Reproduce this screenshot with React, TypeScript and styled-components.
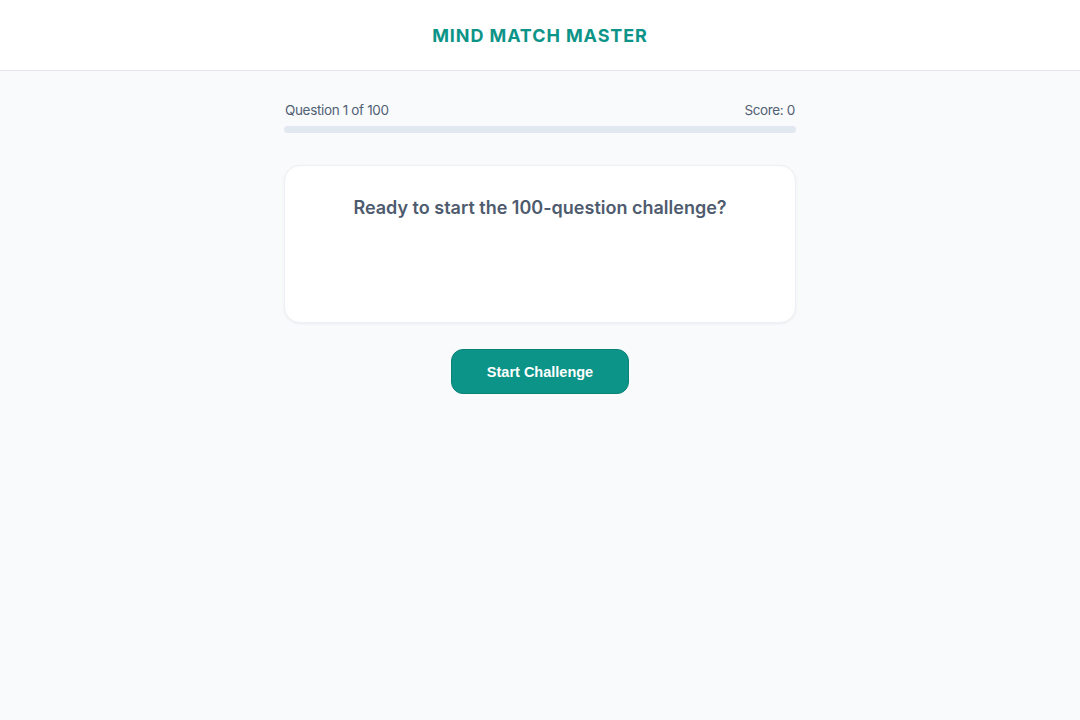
import React, { useState } from 'react';
import styled, { createGlobalStyle } from 'styled-components';

const GlobalStyle = createGlobalStyle`
  * {
    box-sizing: border-box;
  }

  body {
    margin: 0;
    background: #f8fafc;
    font-family: Inter, 'Noto Sans', sans-serif;
  }
`;

const TOTAL = 100;

const App = () => {
  const [current] = useState(1);
  const [score] = useState(0);
  const progress = ((current - 1) / TOTAL) * 100;

  return (
    <Page>
      <GlobalStyle />
      <Header>
        <Title>MIND MATCH MASTER</Title>
      </Header>
      <Main>
        <StatusRow>
          <span>
            Question {current} of {TOTAL}
          </span>
          <span>Score: {score}</span>
        </StatusRow>
        <Track>
          <Fill style={{ width: `${progress}%` }} />
        </Track>
        <Card>
          <Prompt>Ready to start the 100-question challenge?</Prompt>
        </Card>
        <Actions>
          <StartButton>Start Challenge</StartButton>
        </Actions>
      </Main>
    </Page>
  );
};

const Page = styled.div`
  min-height: 100vh;
  background: #f8fafc;
`;

const Header = styled.header`
  height: 71px;
  display: flex;
  align-items: center;
  justify-content: center;
  background: #ffffff;
  border-bottom: 1px solid #e5e7eb;
`;

const Title = styled.h1`
  margin: 0;
  font-size: 18px;
  font-weight: 700;
  letter-spacing: 0.9px;
  color: #0d9488;
`;

const Main = styled.main`
  width: 512px;
  margin: 0 auto;
  padding-top: 29px;
`;

const StatusRow = styled.div`
  display: flex;
  justify-content: space-between;
  padding: 0 1px;
  font-size: 13.5px;
  letter-spacing: -0.35px;
  line-height: 20px;
  color: #526074;
`;

const Track = styled.div`
  margin-top: 6px;
  height: 7px;
  border-radius: 4px;
  background: #e2e8f0;
  overflow: hidden;
`;

const Fill = styled.div`
  height: 100%;
  background: #0d9488;
`;

const Card = styled.section`
  margin-top: 32px;
  min-height: 158px;
  padding: 29px 24px;
  background: #ffffff;
  border: 1px solid #edf0f4;
  border-radius: 16px;
  box-shadow: 0 1px 3px rgba(15, 23, 42, 0.06);
`;

const Prompt = styled.h2`
  margin: 0;
  text-align: center;
  font-size: 18px;
  line-height: 26px;
  font-weight: 600;
  color: #4e5b6e;
`;

const Actions = styled.div`
  display: flex;
  justify-content: center;
  margin-top: 26px;
`;

const StartButton = styled.button`
  width: 178px;
  height: 45px;
  border: 1px solid #0b8277;
  border-radius: 12px;
  background: #0d9488;
  color: #ffffff;
  font-family: 'Liberation Sans', Arial, sans-serif;
  font-size: 14.5px;
  font-weight: 700;
  cursor: pointer;
`;

export default App;
